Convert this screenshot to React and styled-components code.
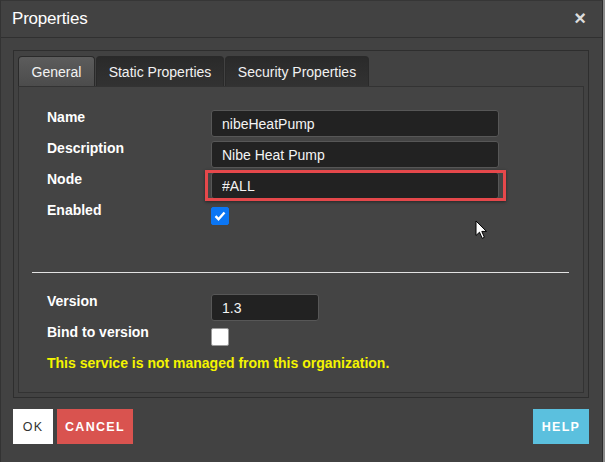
import styled, { createGlobalStyle } from "styled-components";

const GlobalStyle = createGlobalStyle`
  html, body {
    margin: 0;
    padding: 0;
    background: #8a8a8a;
    overflow: hidden;
  }
  body {
    font-family: "Liberation Sans", Arial, sans-serif;
  }
`;

const Dialog = styled.div`
  position: relative;
  width: 603px;
  height: 462px;
  background: #424242;
  border-left: 1px solid #333;
  border-right: 1px solid #2c2c2c;
  border-top: 1px solid #363636;
  box-sizing: border-box;
  display: flex;
  flex-direction: column;
`;

const Header = styled.div`
  height: 36px;
  display: flex;
  align-items: center;
  justify-content: space-between;
  padding: 0 16px 0 11px;
  border-bottom: 1px solid #303030;
`;

const Title = styled.h1`
  margin: 0;
  font-size: 17px;
  font-weight: 400;
  color: #fff;
  letter-spacing: -0.2px;
`;

const Close = styled.span`
  font-size: 20px;
  font-weight: 700;
  color: #dcdcdc;
  line-height: 1;
  margin-top: -2px;
`;

const Body = styled.div`
  padding: 12px 13px 0 12px;
`;

const OuterPanel = styled.div`
  border: 1px solid #2e2e2e;
  padding: 5px 4px 4px 4px;
  display: flex;
  flex-direction: column;
`;

const Tabs = styled.div`
  display: flex;
  height: 30px;
`;

const Tab = styled.div`
  width: ${(p) => p.$w}px;
  height: 30px;
  box-sizing: border-box;
  display: flex;
  align-items: center;
  justify-content: center;
  font-size: 14px;
  color: #f2f2f2;
  border: 1px solid #2a2a2a;
  border-bottom: none;
  border-radius: 4px 4px 0 0;
  margin-right: 1px;
  background: ${(p) =>
    p.$active
      ? "linear-gradient(#5c5c5c, #4c4c4c)"
      : "linear-gradient(#2a2a2a, #323232)"};
`;

const TabContent = styled.div`
  height: 307px;
  box-sizing: border-box;
  border: 1px solid #333;
  background: #444;
  padding: 23px 0 0 28px;
`;

const Row = styled.div`
  display: flex;
  align-items: flex-start;
  margin-bottom: ${(p) => p.$gap ?? 4}px;
`;

const Label = styled.div`
  width: 164px;
  font-size: 14px;
  font-weight: 700;
  color: #fff;
  line-height: 15px;
`;

const InputWrap = styled.div`
  position: relative;

  &::after {
    content: "";
    display: ${(p) => (p.$highlight ? "block" : "none")};
    position: absolute;
    left: -6px;
    right: -7px;
    top: -2px;
    bottom: -2px;
    border: 3px solid #e5484b;
    box-shadow: 0 1px 3px rgba(0, 0, 0, 0.45);
    pointer-events: none;
  }
`;

const Input = styled.input`
  display: block;
  width: ${(p) => p.$w}px;
  height: 27px;
  box-sizing: border-box;
  background: #222;
  border: 1px solid #575757;
  border-radius: 3px;
  color: #f4f4f4;
  font-family: "Liberation Sans", Arial, sans-serif;
  font-size: 14px;
  padding: 0 10px;
  outline: none;
`;

const Check = styled.span`
  display: flex;
  align-items: center;
  justify-content: center;
  width: 18px;
  height: 18px;
  margin-top: ${(p) => p.$top}px;
  box-sizing: border-box;
  border-radius: 2px;
  background: ${(p) => (p.$checked ? "#0b76f4" : "#fff")};
  border: 1px solid ${(p) => (p.$checked ? "#0b76f4" : "#9a9a9a")};
`;

const Separator = styled.hr`
  border: none;
  border-top: 1px solid #e2e2e2;
  margin: 47px 14px 21px -15px;
`;

const Notice = styled.div`
  margin-top: 9px;
  font-size: 14px;
  font-weight: 700;
  color: #f4f400;
`;

const Footer = styled.div`
  display: flex;
  padding: 11px 13px 0 12px;
  gap: 4px;
`;

const Button = styled.button`
  width: ${(p) => p.$w}px;
  height: 35px;
  border: none;
  padding: 0;
  font-family: "Liberation Sans", Arial, sans-serif;
  font-size: 12.5px;
  letter-spacing: 1.3px;
  font-weight: ${(p) => (p.$kind === "ok" ? 400 : 700)};
  color: ${(p) => (p.$kind === "ok" ? "#333" : "#fff")};
  background: ${(p) =>
    p.$kind === "ok" ? "#fff" : p.$kind === "cancel" ? "#d9534f" : "#5bc0de"};
  margin-left: ${(p) => (p.$kind === "help" ? "auto" : "0")};
`;

const Pointer = styled.svg`
  position: absolute;
  left: 474px;
  top: 219px;
`;

const CheckMark = () => (
  <svg width="12" height="10" viewBox="0 0 12 10">
    <path d="M1.5 5.2 L4.5 8.2 L10.5 1.5" fill="none" stroke="#fff" strokeWidth="2.4" />
  </svg>
);

export default function App() {
  return (
    <>
      <GlobalStyle />
      <Dialog>
        <Header>
          <Title>Properties</Title>
          <Close>×</Close>
        </Header>
        <Body>
          <OuterPanel>
            <Tabs>
              <Tab $active $w={77}>General</Tab>
              <Tab $w={128}>Static Properties</Tab>
              <Tab $w={144}>Security Properties</Tab>
            </Tabs>
            <TabContent>
              <Row>
                <Label>Name</Label>
                <InputWrap>
                  <Input $w={288} defaultValue="nibeHeatPump" />
                </InputWrap>
              </Row>
              <Row>
                <Label>Description</Label>
                <InputWrap>
                  <Input $w={288} defaultValue="Nibe Heat Pump" />
                </InputWrap>
              </Row>
              <Row>
                <Label>Node</Label>
                <InputWrap $highlight>
                  <Input $w={288} defaultValue="#ALL" />
                </InputWrap>
              </Row>
              <Row $gap={0}>
                <Label>Enabled</Label>
                <Check $checked $top={4}>
                  <CheckMark />
                </Check>
              </Row>
              <Separator />
              <Row>
                <Label>Version</Label>
                <InputWrap>
                  <Input $w={108} defaultValue="1.3" />
                </InputWrap>
              </Row>
              <Row $gap={0}>
                <Label>Bind to version</Label>
                <Check $top={3} />
              </Row>
              <Notice>This service is not managed from this organization.</Notice>
            </TabContent>
          </OuterPanel>
        </Body>
        <Footer>
          <Button $kind="ok" $w={40}>OK</Button>
          <Button $kind="cancel" $w={76}>CANCEL</Button>
          <Button $kind="help" $w={56}>HELP</Button>
        </Footer>
        <Pointer width="13" height="20" viewBox="0 0 13 20">
          <path
            d="M1 1 L1 15.5 L4.5 12.2 L7.2 18.3 L9.4 17.3 L6.8 11.4 L11.5 11.4 Z"
            fill="#fff"
            stroke="#000"
            strokeWidth="1"
            strokeLinejoin="round"
          />
        </Pointer>
      </Dialog>
    </>
  );
}
